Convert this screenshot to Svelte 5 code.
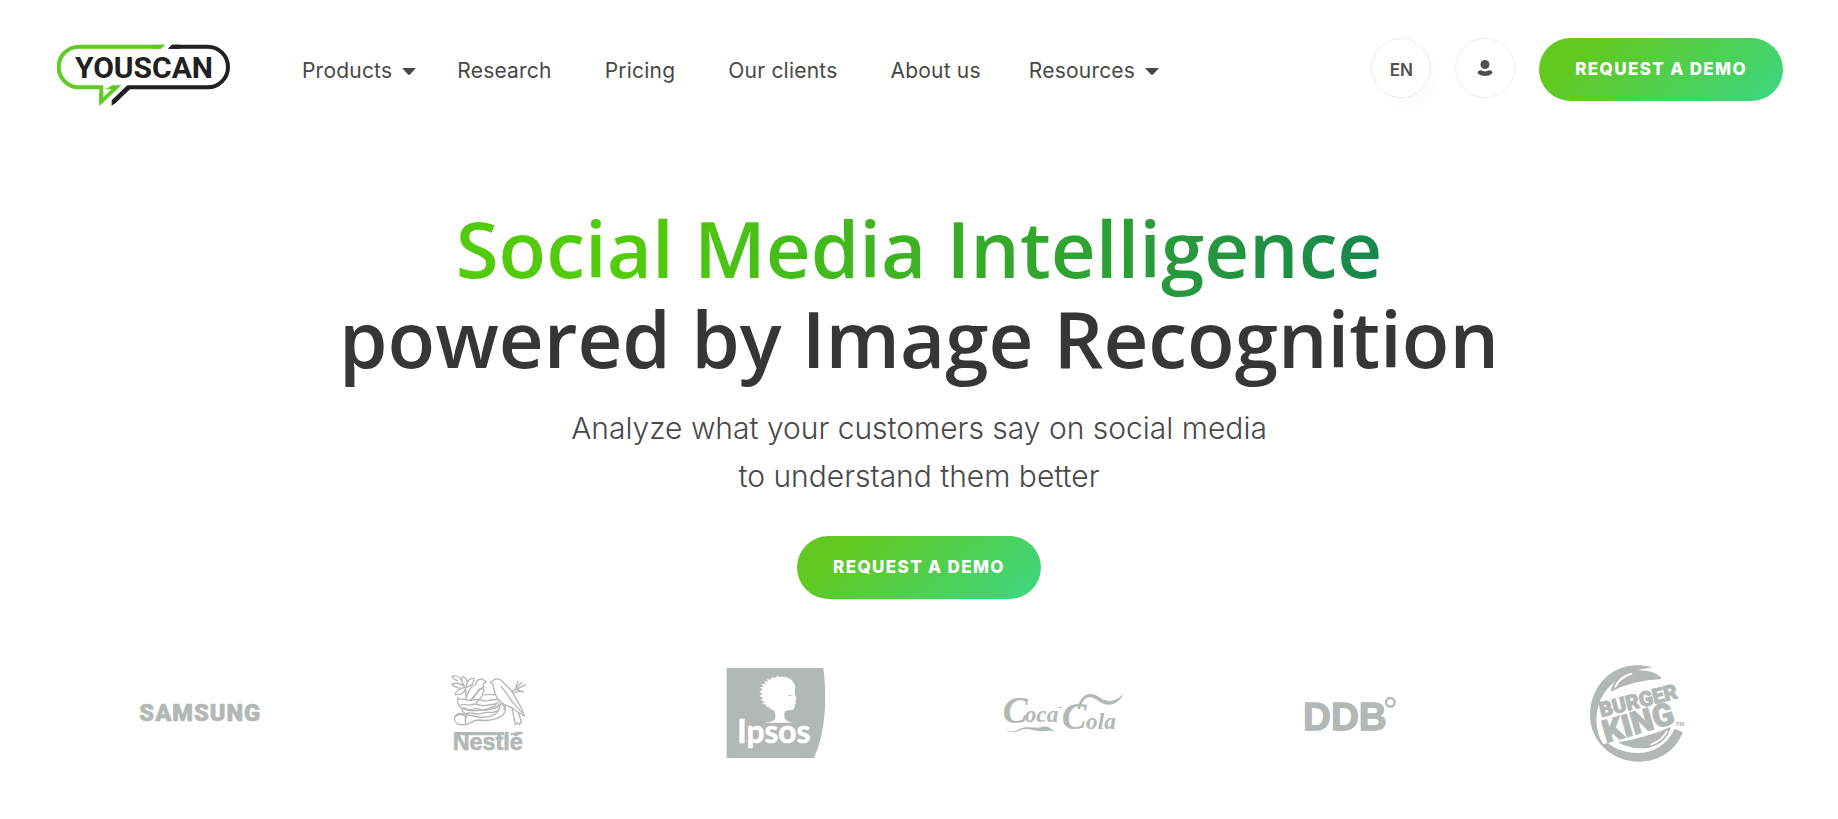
<script lang="ts">
  type NavItem = { label: string; menu?: boolean };

  const nav: NavItem[] = [
    { label: 'Products', menu: true },
    { label: 'Research' },
    { label: 'Pricing' },
    { label: 'Our clients' },
    { label: 'About us' },
    { label: 'Resources', menu: true },
  ];
</script>

<header class="header">
  <a class="logo" href="#home" aria-label="YouScan">
    <svg width="174" height="64" viewBox="51 42 522 192">
      <g fill="none" stroke-width="12">
        <path stroke="#5fcb23" d="M375 50H117a61 61 0 0 0 0 122H184V212L226 172" />
        <path stroke="#212121" d="M386 50H503a61 61 0 0 1 0 122H266L220 218" />
      </g>
      <path fill="#fff" d="M376 42H398L382 58H360Z" />
      <path fill="#5fcb23" d="M340 44H376L363 56H340ZM178 190V228L244 166H216Z" />
      <path fill="#fff" d="M190 178H214L190 202Z" />
      <path fill="#212121" d="M384 56L396 44H420V56ZM215 211V228L270 178L262 166Z" />
      <text x="105" y="145" font-family="Roboto, sans-serif" font-weight="700" font-size="90" fill="#212121">YOUSCAN</text>
    </svg>
  </a>

  <nav class="nav">
    {#each nav as item}
      <a href="#{item.label.toLowerCase().replace(' ', '-')}" class:menu={item.menu}>
        {item.label}
        {#if item.menu}
          <svg width="14" height="7" viewBox="0 0 14 7"><path d="M0 0H14L8 6.500Q7 7.400 6 6.500Z" fill="currentColor" /></svg>
        {/if}
      </a>
    {/each}
  </nav>

  <div class="actions">
    <button class="round lang">EN</button>
    <button class="round" aria-label="Log in">
      <svg width="16" height="16" viewBox="0 0 16 16" fill="#505050">
        <circle cx="8" cy="4.500" r="4.500" />
        <path d="M0.500 12.500C1 10.500 4 9.800 5.500 10.800Q8 12 10.500 10.800C12 9.800 15 10.500 15.500 12.500C14 17 2 17 0.500 12.500Z" />
      </svg>
    </button>
    <a class="demo" href="#demo">REQUEST A DEMO</a>
  </div>
</header>

<main>
  <section class="hero">
    <h1><span>Social Media Intelligence</span><br />powered by Image Recognition</h1>
    <p>Analyze what your customers say on social media<br />to understand them better</p>
    <a class="demo" href="#demo">REQUEST A DEMO</a>
  </section>

  <section class="clients" aria-label="Our clients">
    <!-- Samsung -->
    <svg width="160" height="115" viewBox="0 -15 480 345">
      <text x="58" y="183" font-family="Roboto, sans-serif" font-weight="900" font-size="71" letter-spacing="3" stroke="#b2b8b6" stroke-width="2">SAMSUNG</text>
    </svg>

    <!-- Nestlé -->
    <svg width="115" height="115" viewBox="0 -15 345 345">
      <g fill="none" stroke="#b2b8b6" stroke-width="4" stroke-linecap="round" stroke-linejoin="round">
        <path d="M105 82C92 88 76 84 66 72C78 68 92 68 105 82C96 68 92 58 98 50C112 54 114 66 109 80C110 64 120 52 132 56C132 72 120 80 108 82M105 82C92 84 76 94 75 104C90 105 104 98 107 86L108 112M82 62C72 58 66 54 66 49C78 46 90 50 94 62" />
        <path d="M108 118C112 94 126 78 138 72C140 58 154 52 163 62L169 66L161 70C162 80 156 86 148 90L120 122" />
        <path d="M124 122C136 108 142 94 148 88C154 82 164 86 162 94L158 100C158 110 148 120 138 128" />
        <path d="M180 67L188 63C194 54 208 54 216 64C234 80 250 94 258 116C268 132 278 150 283 168C270 162 254 150 244 142C222 136 202 122 196 102C190 90 192 80 188 73Z" />
        <path d="M214 80C228 96 238 116 256 136L276 158M246 144L256 194L263 188L268 194L274 186L266 160M212 130L208 146M226 136L222 148" />
        <path d="M246 91C256 92 260 84 259 76L264 65M260 82L275 68M259 88L286 74M262 90L280 96M248 97L272 94" />
        <path d="M162 104H196M84 112C80 124 84 138 94 144C118 158 164 154 198 136M86 118C100 112 112 126 128 120C148 112 158 128 174 122C188 116 196 122 202 118" />
        <path d="M88 138C100 126 110 140 126 134C142 126 152 142 168 136C184 130 190 138 204 128M94 146C106 138 114 154 130 148C146 140 158 156 172 150C184 144 194 150 204 138" />
        <path d="M96 148C98 160 112 166 130 168C152 174 184 174 200 158C208 150 210 140 204 132M110 160C126 154 140 168 156 160C172 152 186 164 200 152" />
        <path d="M112 164C100 164 92 156 82 162C72 168 70 182 80 190C90 198 102 192 108 194C122 190 130 180 144 180C170 184 208 180 222 160C230 150 226 138 216 134M112 164C104 174 106 188 108 194M78 168C88 160 102 164 110 172" />
      </g>
      <text x="68" y="270" font-family="'Liberation Sans', sans-serif" font-weight="700" font-size="70" stroke="#b2b8b6" stroke-width="2">Nestlé</text>
      <path d="M73 216H222V226H73ZM242 219L278 215V223L242 226Z" />
    </svg>

    <!-- Ipsos -->
    <svg width="130" height="115" viewBox="0 0 390 345">
      <path d="M50 39H340C352 130 346 232 312 309H50Z" />
      <path fill="#fff" d="M165 203C178 200 192 202 195 190C198 178 194 166 188 164L178 162L182 158L166 154L172 150L156 146L164 141L151 134L160 130L148 122L158 118L148 109L158 106L150 97L160 96L155 87L166 87L163 79L173 80L172 72L182 74L185 67L194 69L202 63L210 66C230 62 254 74 256 98C254 108 254 112 255 118L260 132L256 137L258 145L254 149C256 160 250 166 238 166C226 166 222 172 223 182C224 198 236 200 252 203Z" />
      <path d="M232 121L244 119V124Z" />
      <text x="82" y="264" fill="#fff" font-family="Lato, sans-serif" font-weight="700" font-size="95" stroke="#fff" stroke-width="2">Ipsos</text>
    </svg>

    <!-- Coca-Cola -->
    <svg width="146" height="115" viewBox="0 -75 438 345">
      <text font-family="'Liberation Serif', serif" font-style="italic" font-weight="700"><tspan x="38" y="130" font-size="112">C</tspan><tspan x="104" y="126" font-size="70">oca</tspan><tspan x="205" y="90" font-size="33">-</tspan><tspan x="215" y="148" font-size="112">C</tspan><tspan x="288" y="148" font-size="70">ola</tspan></text>
      <path d="M44 112C34 158 66 160 84 149C112 134 134 148 158 140C174 136 188 148 195 157C178 148 166 156 150 154C130 152 108 142 90 151C66 164 34 158 44 112Z" />
      <path d="M262 86C272 36 308 34 328 52C346 66 372 70 400 42C382 80 350 80 326 64C304 46 280 44 270 88Z" />
    </svg>

    <!-- DDB -->
    <svg width="120" height="115" viewBox="0 -75 360 345">
      <text x="39" y="149" font-family="'Liberation Sans', sans-serif" font-weight="700" font-size="116" stroke="#b2b8b6" stroke-width="4">DDB</text>
      <circle cx="301" cy="67" r="13" fill="none" stroke="#b2b8b6" stroke-width="7" />
    </svg>

    <!-- Burger King -->
    <svg width="116" height="115" viewBox="0 0 348 345">
      <path d="M216 37C105 8 30 90 30 180C30 262 98 320 178 320C238 320 288 286 308 232L284 221C262 268 222 294 172 294C132 294 100 278 84 264L70 268C28 200 40 62 216 37Z" />
      <path d="M92 110C98 72 135 46 178 46C212 46 238 58 245 72Q160 76 92 110Z" />
      <path d="M114 262Q200 248 272 216C264 256 228 280 188 280C158 280 134 274 114 262Z" />
      <path fill="none" stroke="#fff" stroke-width="6" stroke-linecap="round" d="M106 95C116 74 132 62 154 56M214 268C238 260 252 246 260 230" />
      <g font-family="Roboto, sans-serif" font-weight="900" stroke="#b2b8b6" stroke-width="3">
        <text transform="translate(64 187) rotate(-14)" font-size="62">BURGER</text>
        <text transform="translate(78 264) rotate(-16)" font-size="94">KING</text>
      </g>
      <text x="287" y="214" font-family="Roboto, sans-serif" font-weight="700" font-size="17">TM</text>
    </svg>
  </section>
</main>

<style>
  :global(body) { margin: 0; background: #fff; }
  :global(#app) { font-family: Inter, sans-serif; color: #484848; }
  a { color: inherit; text-decoration: none; }
  svg { display: block; flex: none; }

  .header { display: flex; align-items: flex-start; padding: 38px 55px 0 57px; }
  .logo { margin-top: 6px; }
  .nav { display: flex; gap: 53px; margin: 20px 0 0 71px; font-size: 21px; line-height: 26px; letter-spacing: 0.01em; white-space: nowrap; }
  .nav a { display: flex; align-items: center; gap: 10px; }
  .nav .menu { margin-right: -12px; }
  .nav .menu:last-child { margin-left: -5px; }

  .actions { display: flex; gap: 24px; margin-left: auto; }
  .round { box-sizing: border-box; display: flex; align-items: center; justify-content: center; width: 60px; height: 60px; padding: 0; border: 1px solid #ededed; border-radius: 50%; background: #fff; color: #505050; font: 600 17px/24px Inter, sans-serif; cursor: pointer; }
  .lang { padding-top: 4px; box-shadow: 8px 10px 20px rgba(0, 0, 0, 0.02); }
  .demo { display: inline-block; padding: 0 36px; border-radius: 32px; background: linear-gradient(140deg, #61c920 20%, #3bd785 100%); color: #fff; font-size: 17px; font-weight: 800; line-height: 63px; letter-spacing: 0.08em; white-space: nowrap; }

  .hero { padding: 95px 24px 0; text-align: center; }
  h1 { margin: 0; color: #363636; font-family: "Open Sans", sans-serif; font-size: 78px; font-weight: 600; line-height: 90px; }
  h1 span { background: linear-gradient(100deg, #51cb0c 20%, #17864e 100%); -webkit-background-clip: text; background-clip: text; color: transparent; }
  p { margin: 21px 0 36px; font-size: 30px; font-weight: 350; line-height: 48px; }

  .clients { display: grid; grid-template-columns: repeat(6, 1fr); justify-items: center; padding: 56px 56px 48px; fill: #b2b8b6; }
</style>
